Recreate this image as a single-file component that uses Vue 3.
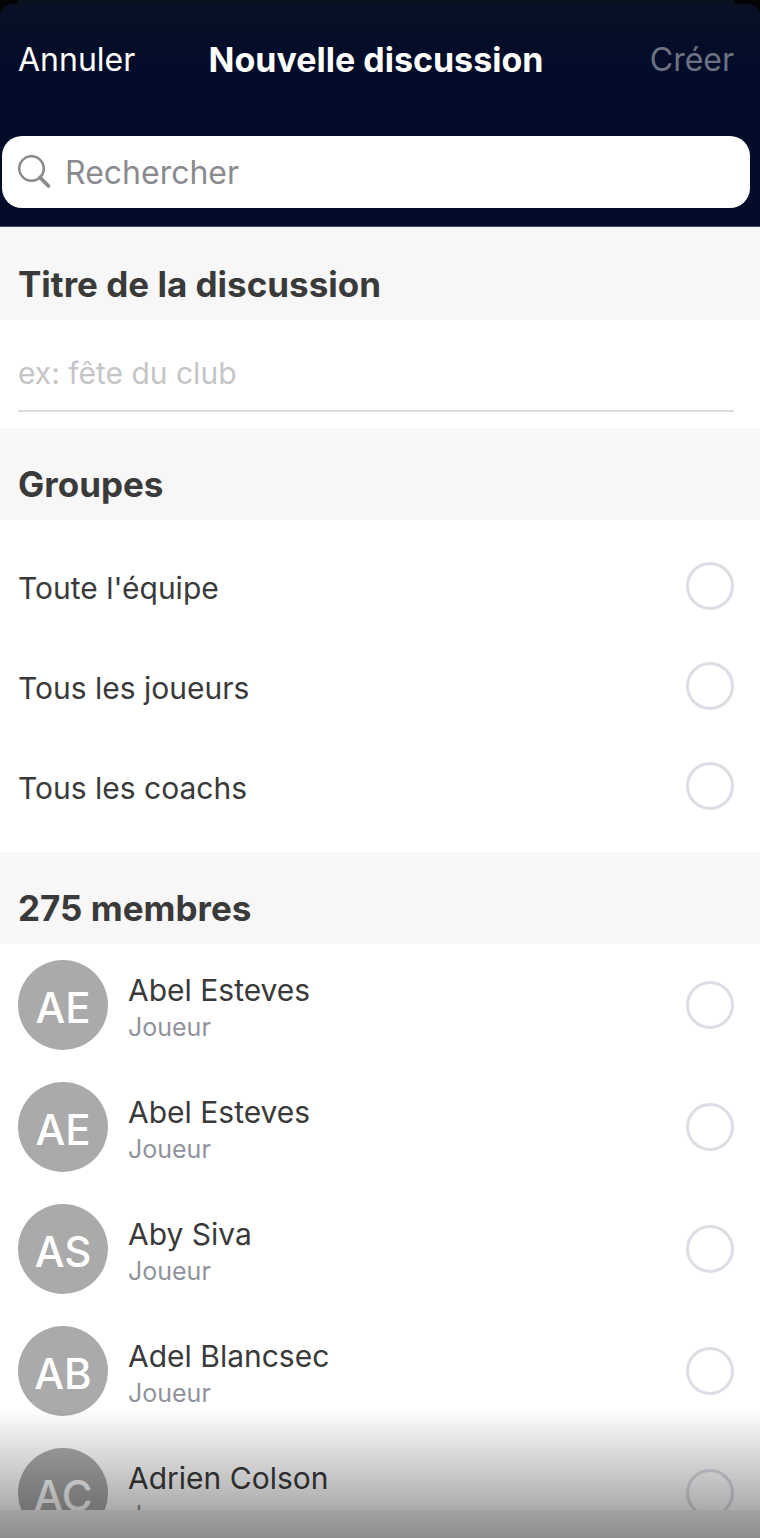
<script setup>
import { ref } from 'vue'

const search = ref('')
const title = ref('')
const selected = ref([])

const groups = ["Toute l'équipe", 'Tous les joueurs', 'Tous les coachs']

const members = [
  { id: 1, initials: 'AE', name: 'Abel Esteves', role: 'Joueur' },
  { id: 2, initials: 'AE', name: 'Abel Esteves', role: 'Joueur' },
  { id: 3, initials: 'AS', name: 'Aby Siva', role: 'Joueur' },
  { id: 4, initials: 'AB', name: 'Adel Blancsec', role: 'Joueur' },
  { id: 5, initials: 'AC', name: 'Adrien Colson', role: 'Joueur' },
]
</script>

<template>
  <div class="screen">
    <div class="backdrop"><div class="sheet-behind"></div></div>
    <header class="header">
      <nav class="nav">
        <button class="nav-button" type="button">Annuler</button>
        <h1 class="nav-title">Nouvelle discussion</h1>
        <button class="nav-button create" type="button" disabled>Créer</button>
      </nav>
      <label class="search">
        <svg class="search-icon" viewBox="0 0 34 34" fill="none" stroke="#8b8b8f" aria-hidden="true">
          <circle cx="13.500" cy="13.500" r="12.300" stroke-width="2.600" />
          <path d="M22 22.500 L30.500 31" stroke-width="3.800" stroke-linecap="round" />
        </svg>
        <input v-model="search" class="search-input" type="text" placeholder="Rechercher" aria-label="Rechercher" />
      </label>
    </header>

    <main class="content">
      <h2 class="section"><label for="title">Titre de la discussion</label></h2>
      <div class="field">
        <input id="title" v-model="title" class="title-input" type="text" placeholder="ex: fête du club" />
      </div>

      <h2 class="section">Groupes</h2>
      <div class="groups">
        <label v-for="group in groups" :key="group" class="group">
          <span class="name">{{ group }}</span>
          <input v-model="selected" class="check" type="checkbox" :value="group" />
        </label>
      </div>

      <h2 class="section">275 membres</h2>
      <label v-for="member in members" :key="member.id" class="member">
        <span class="avatar">{{ member.initials }}</span>
        <span class="identity">
          <span class="name">{{ member.name }}</span>
          <span class="role">{{ member.role }}</span>
        </span>
        <input v-model="selected" class="check" type="checkbox" :value="member.id" />
      </label>
    </main>

    <footer class="footer"></footer>
    <div class="shade"></div>
  </div>
</template>

<style>
body {
  margin: 0;
}
</style>

<style scoped>
.screen {
  position: relative;
  display: flex;
  flex-direction: column;
  height: 100vh;
  overflow: hidden;
  box-sizing: border-box;
  background: #050505;
  color: #3a3a3a;
  font-family: Inter, "Liberation Sans", sans-serif;
}
.backdrop {
  flex: none;
  height: 4px;
  padding: 0 26px 0 18px;
}
.sheet-behind {
  height: 4px;
  background: #0a1222;
}
.header {
  flex: none;
  padding-bottom: 18px;
  border-bottom: 1px solid #4a5068;
  border-radius: 12px 12px 0 0;
  background: linear-gradient(#091126, #030c29 56px);
}
.nav {
  display: grid;
  grid-template-columns: 1fr auto 1fr;
  align-items: center;
  height: 112px;
  margin-bottom: 20px;
  padding: 0 26px 0 18px;
}
.nav-button {
  justify-self: start;
  padding: 0;
  border: 0;
  background: none;
  color: #fff;
  font: 400 32px/40px Inter, sans-serif;
}
.create {
  justify-self: end;
  color: #6d7283;
}
.nav-title {
  margin: 0;
  color: #fff;
  font-size: 34px;
  font-weight: 700;
  line-height: 40px;
}
.search {
  display: flex;
  align-items: center;
  gap: 13px;
  height: 72px;
  margin: 0 10px 0 2px;
  padding: 0 16px;
  border-radius: 20px;
  background: #fff;
}
.search-icon {
  flex: none;
  width: 34px;
  height: 34px;
}
.search-input,
.title-input {
  box-sizing: border-box;
  width: 100%;
  min-width: 0;
  padding: 2px 0 0;
  border: 0;
  outline: 0;
  background: none;
  color: #3a3a3a;
  font: 400 32px/40px Inter, sans-serif;
}
.search-input::placeholder {
  color: #8b8b8f;
  opacity: 1;
}
.content {
  flex: 1;
  min-height: 0;
  overflow: hidden;
  border-top: 1px solid #f0f0f3;
  background: #fff;
}
.section {
  height: 92px;
  margin: 0;
  padding: 35px 18px 0;
  box-sizing: border-box;
  background: #f7f7f7;
  font-size: 35px;
  font-weight: 700;
  line-height: 42px;
}
.field {
  padding: 24px 26px 16px 18px;
}
.title-input {
  display: block;
  height: 68px;
  padding: 0 0 8px;
  border-bottom: 2px solid #d9dce2;
  font-size: 30px;
}
.title-input::placeholder {
  color: #c5c5c7;
  opacity: 1;
}
.groups {
  padding: 16px 0;
}
.group,
.member {
  display: flex;
  align-items: center;
  justify-content: space-between;
  padding: 0 26px 0 18px;
}
.group {
  height: 100px;
}
.group .name {
  padding-top: 4px;
}
.member {
  height: 122px;
}
.name {
  font-size: 30px;
  line-height: 38px;
}
.avatar {
  display: flex;
  flex: none;
  align-items: center;
  justify-content: center;
  box-sizing: border-box;
  width: 90px;
  height: 90px;
  margin-right: 20px;
  padding-top: 4px;
  border-radius: 50%;
  background: #aaa;
  color: #fff;
  font-size: 42px;
  font-weight: 500;
}
.identity {
  display: flex;
  flex: 1;
  flex-direction: column;
  padding-top: 6px;
}
.role {
  color: #8f939c;
  font-size: 25px;
  line-height: 36px;
}
.check {
  flex: none;
  box-sizing: border-box;
  width: 48px;
  height: 48px;
  margin: 0;
  appearance: none;
  border: 3px solid #dcdee6;
  border-radius: 50%;
  background: transparent;
}
.check:checked {
  border-color: #030c29;
  background: #030c29;
}
.footer {
  flex: none;
  height: 28px;
  background: #f2f2f2;
}
.shade {
  position: absolute;
  right: 0;
  bottom: 0;
  left: 0;
  height: 130px;
  background: linear-gradient(rgba(0, 0, 0, 0), rgba(0, 0, 0, 0.42));
  pointer-events: none;
}
</style>
